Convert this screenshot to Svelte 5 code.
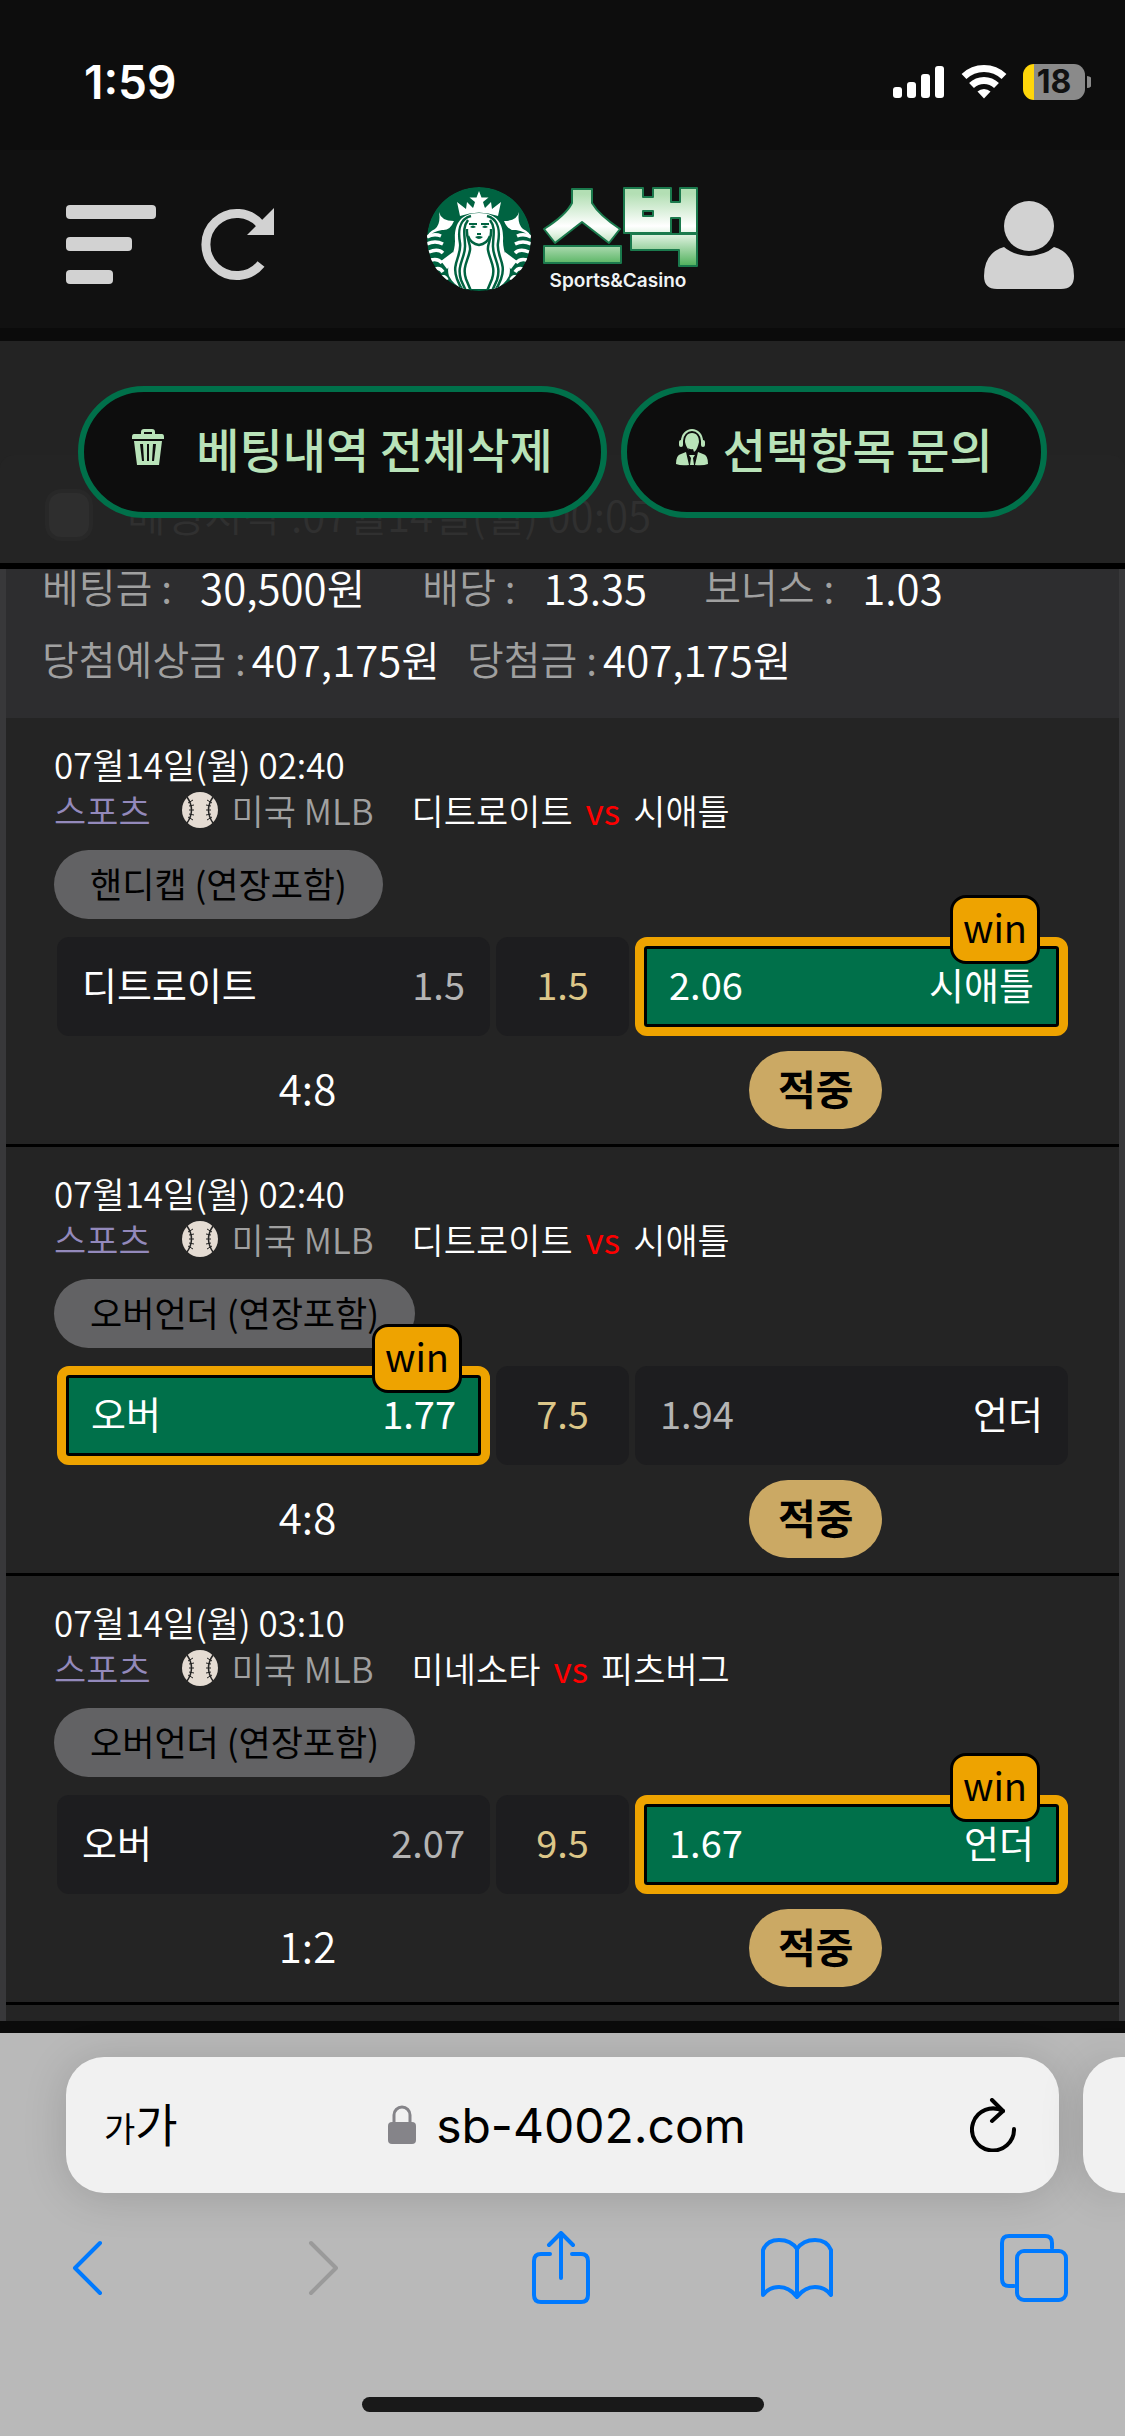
<script>
    const summary = [
        { label: '베팅금 :', value: '30,500원' },
        { label: '배당 :', value: '13.35' },
        { label: '보너스 :', value: '1.03' },
    ];

    const payout = [
        { label: '당첨예상금 :', value: '407,175원' },
        { label: '당첨금 :', value: '407,175원' },
    ];

    const games = [
        {
            date: '07월14일(월) 02:40', home: '디트로이트', away: '시애틀',
            type: '핸디캡 (연장포함)', left: '디트로이트', leftOdds: '1.5',
            line: '1.5', right: '시애틀', rightOdds: '2.06', win: 'right', score: '4:8',
        },
        {
            date: '07월14일(월) 02:40', home: '디트로이트', away: '시애틀',
            type: '오버언더 (연장포함)', left: '오버', leftOdds: '1.77',
            line: '7.5', right: '언더', rightOdds: '1.94', win: 'left', score: '4:8',
        },
        {
            date: '07월14일(월) 03:10', home: '미네소타', away: '피츠버그',
            type: '오버언더 (연장포함)', left: '오버', leftOdds: '2.07',
            line: '9.5', right: '언더', rightOdds: '1.67', win: 'right', score: '1:2',
        },
    ];

    let checked = false;
</script>

<div class="screen">
    <div class="status">
        <span class="time">1:59</span>
        <div class="indicators">
            <svg width="52" height="34" viewBox="0 0 52 34" fill="#fff">
                <rect x="0" y="22" width="9" height="11" rx="3" />
                <rect x="14" y="17" width="9" height="16" rx="3" />
                <rect x="28" y="9" width="9" height="24" rx="3" />
                <rect x="42" y="1" width="9" height="32" rx="3" />
            </svg>
            <svg width="46" height="34" viewBox="0 0 46 34" fill="none" stroke="#fff" stroke-width="7">
                <path d="M3 11.500a29 29 0 0 1 40 0" />
                <path d="M10.500 20.500a18 18 0 0 1 25 0" />
                <path d="M23 33.500l-6.500-7a9.500 9.500 0 0 1 13 0z" fill="#fff" stroke="none" />
            </svg>
            <div class="battery">18</div>
            <svg class="nub" width="4" height="12" viewBox="0 0 4 12"><path d="M0 0a6 6 0 0 1 0 12z" fill="#8a8a8a" /></svg>
        </div>
    </div>

    <header>
        <div class="side">
            <button aria-label="메뉴">
                <svg width="90" height="80" viewBox="0 0 90 80" fill="#d2d2d2">
                    <rect width="90" height="14" rx="4" />
                    <rect y="32" width="66" height="14" rx="4" />
                    <rect y="65" width="47" height="14" rx="4" />
                </svg>
            </button>
            <button aria-label="새로고침">
                <svg width="74" height="74" viewBox="0 0 74 74">
                    <path d="M60 56A31 31 0 1 1 60 17" fill="none" stroke="#d2d2d2" stroke-width="9" />
                    <path d="M73 0v27H46z" fill="#d2d2d2" />
                </svg>
            </button>
        </div>
        <a class="logo" href="#home" aria-label="스벅">
            <svg width="104" height="104" viewBox="0 0 104 104">
                <clipPath id="seal"><circle cx="52" cy="52" r="52" /></clipPath>
                <g clip-path="url(#seal)">
                    <circle cx="52" cy="52" r="52" fill="#006341" />
                    <path fill="#fff" d="M52 4l2.500 6.500h7l-5.500 4.500 2 6.500-6-4-6 4 2-6.500-5.500-4.500h7z" />
                    <path fill="#fff" d="M30 15l9 7 1-7 6 6 6-5 6 5 6-6 1 7 9-7-3 14Q52 22 33 29z" />
                    <path fill="#fff" d="M12 25q2 9 15 9-4 10-12 9-9 1-15 8 1-6 8-9 6-5 4-17zM92 25q-2 9-15 9 4 10 12 9 9 1 15 8-1-6-8-9-6-5-4-17z" />
                    <g fill="none" stroke="#fff" stroke-width="3.500">
                        <path d="M0 50q7-4 14-1M0 57q8-4 16 0M2 65q9-4 14 1M4 73q7-2 11 3M8 82q5-2 8 3M14 91q4-3 6 2" />
                        <path d="M104 50q-7-4-14-1M104 57q-8-4-16 0M102 65q-9-4-14 1M100 73q-7-2-11 3M96 82q-5-2-8 3M90 91q-4-3-6 2" />
                    </g>
                    <path fill="#fff" d="M14 74l12-9 2 10-8 7zM90 74l-12-9-2 10 8 7z" />
                    <path fill="#fff" d="M52 26c-20 0-25 13-24 28 0 16-10 22-6 35 3 6 8 10 13 13h34c5-3 10-7 13-13 4-13-6-19-6-35 1-15-4-28-24-28z" />
                    <g fill="none" stroke="#006341" stroke-width="2.500">
                        <path d="M44 29c-12 3-13 16-11 27 2 13-9 20-3 36 2 5 4 9 6 12" />
                        <path d="M41 33c-6 8-3 16-3 25 1 12-9 20-4 35l5 11" />
                        <path d="M40 42c-1 10 4 15 3 21-2 11-8 17-4 29l5 12" />
                        <path d="M60 29c12 3 13 16 11 27-2 13 9 20 3 36-2 5-4 9-6 12" />
                        <path d="M63 33c6 8 3 16 3 25-1 12 9 20 4 35l-5 11" />
                        <path d="M64 42c1 10-4 15-3 21 2 11 8 17 4 29l-5 12" />
                        <path d="M41 49q3 8 11 9 8-1 11-9" />
                    </g>
                    <path fill="#006341" d="M42 36h8v2h-8zM54 36h8v2h-8zM43 40q3-3 6 0-3 2-6 0zM55 40q3-3 6 0-3 2-6 0zM48 50q4-2 8 0-4 4-8 0zM50 46h4v2h-4z" />
                </g>
            </svg>
            <svg width="156" height="106" viewBox="0 0 156 106">
                <defs>
                    <linearGradient id="mint" x1="0" y1="0" x2="0" y2="80" gradientUnits="userSpaceOnUse">
                        <stop offset="0.1" stop-color="#b3dfb4" />
                        <stop offset="0.5" stop-color="#fff" />
                        <stop offset="0.6" stop-color="#e2f3e3" />
                        <stop offset="1" stop-color="#4fb05a" />
                    </linearGradient>
                </defs>
                <g fill="url(#mint)" stroke="#1b7a4d" stroke-width="2" stroke-linejoin="round">
                    <path d="M30 3h20v14Q57 29 78 43L67 57 40 36 13 57 2 43Q24 29 30 17z" />
                    <path d="M2 60h77v17H2z" />
                    <path d="M82 2h19v9h10V2h18v14h9V2h17v45h-17V32h-9v15H82zM101 25v5h10v-5z" fill-rule="evenodd" />
                    <path d="M89 48h66v32h-18V64H89z" />
                </g>
                <text x="76" y="101" text-anchor="middle">Sports&amp;Casino</text>
            </svg>
        </a>
        <button class="user" aria-label="내 정보">
            <svg width="90" height="90" viewBox="0 0 90 90" fill="#d2d2d2">
                <circle cx="45" cy="26" r="25" />
                <path d="M20 47Q29 55 45 56 61 55 70 47 90 53 90 76 90 89 77 89H13Q0 89 0 76 0 53 20 47z" />
            </svg>
        </button>
    </header>

    <section class="actions">
        <label class="behind">
            <input type="checkbox" bind:checked={checked}>
            <span>베팅시각 :07월14일(월) 00:05</span>
        </label>
        <button class="pill">
            <svg class="trash" width="32" height="36" viewBox="0 0 32 36" fill="#b9e3b9">
                <path d="M2 5h7V3q0-3 3-3h8q3 0 3 3v2h7q2 0 2 3v2H0V8q0-3 2-3zM12 5h8V3h-8z" fill-rule="evenodd" />
                <path d="M2 12h28l-3 24H5zM8 15l2 17h2L11 15zM15 15v17h2V15zM21 15l-1 17h2l2-17z" fill-rule="evenodd" />
            </svg>
            베팅내역 전체삭제
        </button>
        <button class="pill">
            <svg class="agent" width="34" height="38" viewBox="0 0 34 38" fill="#b9e3b9">
                <path d="M7 15v-2a10 11 0 0 1 20 0v2" fill="none" stroke="#b9e3b9" stroke-width="2" />
                <rect x="4" y="12" width="4" height="7" rx="2" />
                <rect x="26" y="12" width="4" height="7" rx="2" />
                <path d="M17 5c-5 0-7 4-7 9 1 4 2 6 4 8l-1-2q3 2 5 1l1 3c3-2 4-6 5-10 0-5-2-9-7-9z" />
                <path d="M11 24l3 13Q6 38 1 36q0-9 5-10zM23 24l-3 13q8 1 13-1 0-9-5-10zM14 27h6l-2 3 1 7h-4l1-7z" />
            </svg>
            선택항목 문의
        </button>
    </section>

    <main>
        <div class="summary">
            <dl class="wide">
                {#each summary as item}
                    <div><dt>{item.label}</dt><dd>{item.value}</dd></div>
                {/each}
            </dl>
            <dl>
                {#each payout as item}
                    <div><dt>{item.label}</dt><dd>{item.value}</dd></div>
                {/each}
            </dl>
        </div>

        {#each games as game}
            <article>
                <div class="date">{game.date}</div>
                <div class="match">
                    <span class="sport">스포츠</span>
                    <svg width="36" height="36" viewBox="0 0 36 36">
                        <circle cx="18" cy="18" r="18" fill="#e5dcd3" />
                        <g fill="none" stroke="#242424">
                            <path d="M5 5q9 13 0 26M31 5q-9 13 0 26" stroke-width="1.500" />
                            <path d="M6 11l5-3M7 14l5-1M7 18h5M7 22l5 1M6 25l5 3M30 11l-5-3M29 14l-5-1M29 18h-5M29 22l-5 1M30 25l-5 3" />
                        </g>
                    </svg>
                    <span class="league">미국 MLB</span>
                    <span>{game.home}</span>
                    <span class="vs">vs</span>
                    <span>{game.away}</span>
                </div>
                <div class="type">{game.type}</div>
                <div class="odds">
                    <button class="bet" class:won={game.win === 'left'}>
                        <span>{game.left}</span><span class="rate">{game.leftOdds}</span>
                        {#if game.win === 'left'}<span class="win">win</span>{/if}
                    </button>
                    <div class="line">{game.line}</div>
                    <button class="bet" class:won={game.win === 'right'}>
                        <span class="rate">{game.rightOdds}</span><span>{game.right}</span>
                        {#if game.win === 'right'}<span class="win">win</span>{/if}
                    </button>
                </div>
                <div class="result">
                    <span class="score">{game.score}</span>
                    <span class="hit">적중</span>
                </div>
            </article>
        {/each}
    </main>

    <footer>
        <div class="tabs">
            <div class="address">
                <button class="aa" aria-label="페이지 설정"><small>가</small>가</button>
                <a class="url" href="#address">
                    <svg width="28" height="40" viewBox="0 0 28 40">
                        <path d="M6 18v-8a8 8 0 0 1 16 0v8" fill="none" stroke="#858489" stroke-width="3" />
                        <rect y="17" width="28" height="22" rx="4" fill="#858489" />
                    </svg>
                    sb-4002.com
                </a>
                <button class="reload" aria-label="새로고침">
                    <svg width="46" height="54" viewBox="0 0 46 54" fill="none" stroke="#000" stroke-width="4" stroke-linecap="round" stroke-linejoin="round">
                        <path d="M44 31A21 21 0 1 1 33 13" />
                        <path d="M22 2l11 11-11 10" />
                    </svg>
                </button>
            </div>
            <div class="next"></div>
        </div>
        <nav>
            <button aria-label="뒤로">
                <svg width="32" height="56" viewBox="0 0 32 56" stroke="#007aff"><path d="M29 3L4 28l25 25" /></svg>
            </button>
            <button aria-label="앞으로">
                <svg width="32" height="56" viewBox="0 0 32 56" stroke="#9a9a9a"><path d="M3 3l25 25L3 53" /></svg>
            </button>
            <button aria-label="공유">
                <svg width="58" height="74" viewBox="0 0 58 74" stroke="#007aff">
                    <path d="M18 23H9q-7 0-7 7v34q0 7 7 7h40q7 0 7-7V30q0-7-7-7h-9" />
                    <path d="M29 47V3M17 14L29 2l12 12" />
                </svg>
            </button>
            <button aria-label="책갈피">
                <svg width="72" height="62" viewBox="0 0 72 62" stroke="#007aff">
                    <path d="M36 12Q30 3 18 3T2 13v45q6-8 16-8t18 10q8-10 18-10t16 8V13Q66 3 54 3T36 12v46" />
                </svg>
            </button>
            <button aria-label="탭">
                <svg width="68" height="68" viewBox="0 0 68 68" stroke="#007aff">
                    <path d="M14 52h-5q-7 0-7-7V9q0-7 7-7h36q7 0 7 7v5" />
                    <rect x="17" y="17" width="49" height="49" rx="7" />
                </svg>
            </button>
        </nav>
        <div class="home"></div>
    </footer>
</div>

<style>
:global(body) {
    background: #0d0d0d;
    font-family: "Noto Sans CJK KR", sans-serif;
    font-weight: 350;
    color: #fff;
}

.screen {
    display: flex;
    flex-direction: column;
    overflow: hidden;
}

button {
    padding: 0;
    border: 0;
    background: none;
    color: inherit;
    font: inherit;
}

a {
    color: inherit;
    text-decoration: none;
}

svg {
    display: block;
    flex: none;
}

.status {
    display: flex;
    justify-content: space-between;
    box-sizing: border-box;
    height: 150px;
    padding: 56px 34px 0 84px;
    font-family: Inter, sans-serif;
}

.time {
    font-size: 46px;
    font-weight: 600;
    line-height: 52px;
}

.indicators {
    display: flex;
    align-items: center;
    height: 52px;
    gap: 16px;
}

.battery {
    width: 62px;
    height: 36px;
    border-radius: 11px;
    background: linear-gradient(to right, #ffd60a 11px, #8a8a8a 11px);
    color: #111;
    font-size: 32px;
    font-weight: 700;
    line-height: 36px;
    text-align: center;
}

.nub {
    margin-left: -14px;
}

header {
    display: grid;
    grid-template-columns: 1fr auto 1fr;
    align-items: center;
    box-sizing: border-box;
    height: 191px;
    padding: 11px 51px 0;
    background: #111;
    border-bottom: 13px solid #0b0b0b;
}

.side {
    display: flex;
    align-items: center;
    gap: 45px;
    padding-left: 15px;
}

.user {
    justify-self: end;
}

.logo {
    display: flex;
    align-items: center;
    gap: 11px;
    margin-bottom: 11px;
}

.logo text {
    fill: #f0f3f5;
    font-family: Inter, sans-serif;
    font-size: 19px;
    font-weight: 600;
}

.actions {
    position: relative;
    display: flex;
    justify-content: center;
    gap: 14px;
    padding: 45px 0;
    background: #232323;
    border-bottom: 6px solid #000;
}

/* bet slip heading that has scrolled under the action bar */
.behind {
    position: absolute;
    left: 0;
    right: 0;
    bottom: 0;
    display: flex;
    gap: 34px;
    box-sizing: border-box;
    height: 108px;
    padding: 34px 45px;
    border-radius: 14px 14px 0 0;
    background: #242424;
    color: #303030;
    font-size: 42px;
    line-height: 50px;
}

.behind input {
    appearance: none;
    width: 48px;
    height: 52px;
    margin: 0;
    border: 4px solid #282828;
    border-radius: 16px;
    background: #2e2e2e;
}

.pill {
    position: relative;
    display: flex;
    align-items: center;
    height: 132px;
    padding: 0 48px 10px;
    border: 6px solid #00704a;
    border-radius: 66px;
    background: #0d0d0d;
    color: #b9e3b9;
    font-size: 47px;
    font-weight: 500;
}

.trash {
    margin-right: 32px;
}

.agent {
    margin-right: 14px;
}

main {
    border: solid #38383a;
    border-width: 0 6px;
    padding-bottom: 16px;
    background: #242424;
}

.summary {
    height: 149px;
    padding: 0 36px;
    box-sizing: border-box;
    background: #2d2d2f;
    font-size: 40px;
    line-height: 35px;
}

dl, dl div {
    display: flex;
}

dl div {
    gap: 6px;
}

dl {
    margin: 0;
    gap: 27px;
    height: 72px;
}

dl.wide {
    gap: 57px;
}

dl.wide div {
    gap: 28px;
}

dt {
    color: #a0a0a0;
}

dd {
    margin: 0;
    font-size: 42px;
}

article {
    padding: 23px 51px 15px 48px;
    border-bottom: 3px solid #000;
    font-size: 35px;
    line-height: 46px;
}

.match {
    display: flex;
    align-items: center;
}

.sport {
    margin-right: 31px;
    color: #9389bb;
}

.league {
    margin: 0 38px 0 14px;
    color: #a0a0a0;
}

.vs {
    margin: 0 13px;
    color: #f00;
    font-weight: 400;
}

.type {
    width: fit-content;
    margin-top: 17px;
    padding: 0 36px 4px;
    border-radius: 35px;
    background: #626264;
    color: #000;
    font-weight: 400;
    line-height: 65px;
}

.odds {
    display: flex;
    gap: 6px;
    margin: 18px 0 0 3px;
}

.bet, .line {
    box-sizing: border-box;
    height: 99px;
    border-radius: 12px;
    background: #1d1d1f;
    font-size: 38px;
    font-weight: 400;
}

.bet {
    position: relative;
    display: flex;
    flex: 1 1 40%;
    justify-content: space-between;
    align-items: center;
    padding: 0 25px 6px;
}

.rate {
    color: #b4b4b4;
}

.line {
    width: 133px;
    color: #dcc688;
    line-height: 93px;
    text-align: center;
}

.won {
    border: 9px solid #eea300;
    background: #00704a;
    box-shadow: inset 0 0 0 3px #000;
}

.won .rate {
    color: #fff;
}

.win {
    position: absolute;
    top: -51px;
    right: 19px;
    box-sizing: border-box;
    width: 90px;
    height: 69px;
    border: 3px solid #000;
    border-radius: 16px;
    background: #eea300;
    color: #000;
    line-height: 58px;
    text-align: center;
}

.result {
    display: flex;
    align-items: center;
    margin-top: 15px;
}

.result span {
    flex: none;
    padding-bottom: 6px;
    line-height: 72px;
}

.score {
    width: 50%;
    font-size: 42px;
    text-align: center;
}

.result .hit {
    margin-left: 188px;
    padding: 0 29px 6px;
    border-radius: 39px;
    background: #cba964;
    color: #000;
    font-size: 41px;
    font-weight: 700;
}

footer {
    padding-bottom: 24px;
    border-top: 12px solid #0b0b0b;
    background: #b9b9b9;
    color: #000;
}

.tabs {
    display: flex;
    gap: 24px;
    padding: 24px 0 0 66px;
}

.address {
    display: grid;
    grid-template-columns: 1fr auto 1fr;
    flex: 1;
    align-items: center;
    height: 136px;
    padding: 0 43px 0 38px;
    border-radius: 38px;
    background: #f1f1f1;
    box-shadow: 0 4px 44px rgba(0, 0, 0, 0.15);
}

.next {
    width: 42px;
    height: 136px;
    border-radius: 38px 0 0 38px;
    background: #f1f1f1;
    box-shadow: 0 4px 44px rgba(0, 0, 0, 0.15);
}

.aa {
    justify-self: start;
    padding-bottom: 6px;
    font-size: 46px;
    font-weight: 400;
}

.aa small {
    font-size: 34px;
}

.reload {
    justify-self: end;
}

.url {
    display: flex;
    align-items: center;
    gap: 20px;
    padding-left: 14px;
    font-family: Inter, sans-serif;
    font-size: 48px;
    font-weight: 400;
}

nav {
    display: flex;
    justify-content: space-between;
    align-items: center;
    height: 76px;
    padding: 37px 54px 0 50px;
}

nav button {
    width: 74px;
}

nav svg {
    margin: 0 auto;
    fill: none;
    stroke-width: 4;
    stroke-linecap: round;
    stroke-linejoin: round;
}

.home {
    width: 402px;
    height: 15px;
    margin: 91px auto 0;
    border-radius: 8px;
    background: #191919;
}
</style>
